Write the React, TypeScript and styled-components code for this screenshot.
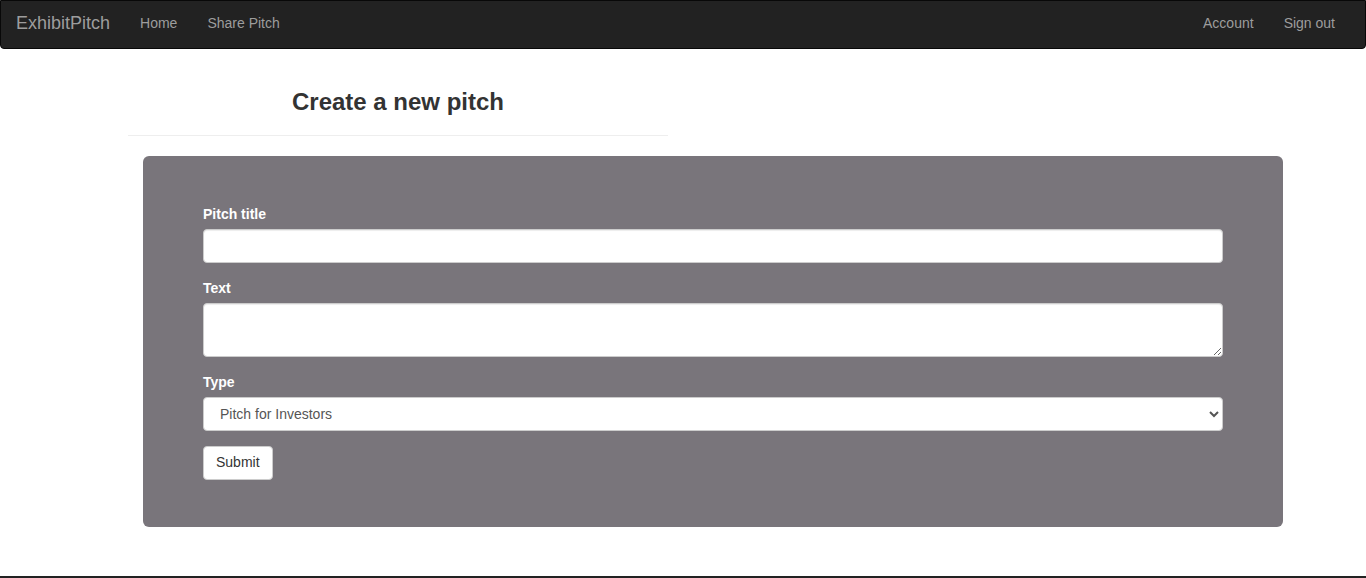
import React from "react";
import styled, { createGlobalStyle } from "styled-components";

const GlobalStyle = createGlobalStyle`
  html, body { margin: 0; padding: 0; background: #fff; }
  body {
    font-family: "Liberation Sans", Arial, Helvetica, sans-serif;
    font-size: 14px;
    line-height: 1.42857;
    color: #333;
  }
  * { box-sizing: border-box; }
`;

const Navbar = styled.nav`
  height: 49px;
  background: #222;
  border: 1px solid #080808;
  border-radius: 0 0 4px 4px;
  display: flex;
  align-items: center;
  justify-content: space-between;
  padding: 0 15px 3px;
`;

const NavGroup = styled.div`
  display: flex;
  align-items: center;
`;

const Brand = styled.a`
  font-size: 18px;
  line-height: 20px;
  color: #9d9d9d;
  padding: 0 15px 0 0;
  text-decoration: none;
`;

const NavLink = styled.a`
  font-size: 14px;
  line-height: 20px;
  color: #9d9d9d;
  padding: 0 15px;
  text-decoration: none;
`;

const Main = styled.main`
  padding: 0 83px 0 128px;
  height: 527px;
`;

const Header = styled.div`
  width: 540px;
  padding-top: 40px;
  border-bottom: 1px solid #eee;
  padding-bottom: 20px;
  margin-bottom: 20px;
`;

const Title = styled.h2`
  margin: 0;
  text-align: center;
  font-size: 24px;
  line-height: 26px;
  font-weight: 700;
  color: #333;
`;

const Panel = styled.form`
  margin-left: 15px;
  background: #79757b;
  border-radius: 6px;
  padding: 48px 60px 47px;
`;

const FormGroup = styled.div`
  margin-bottom: 15px;
`;

const Label = styled.label`
  display: block;
  font-weight: 700;
  color: #fff;
  line-height: 20px;
  margin-bottom: 5px;
`;

const Input = styled.input`
  display: block;
  width: 100%;
  height: 34px;
  padding: 6px 12px;
  font: inherit;
  color: #555;
  background: #fff;
  border: 1px solid #ccc;
  border-radius: 4px;
  box-shadow: inset 0 1px 1px rgba(0, 0, 0, 0.075);
`;

const TextArea = styled.textarea`
  display: block;
  width: 100%;
  height: 54px;
  padding: 6px 12px;
  font: inherit;
  color: #555;
  background: #fff;
  border: 1px solid #ccc;
  border-radius: 4px;
  box-shadow: inset 0 1px 1px rgba(0, 0, 0, 0.075);
`;

const Select = styled.select`
  display: block;
  width: 100%;
  height: 34px;
  padding: 6px 8px 6px 12px;
  font: inherit;
  color: #555;
  background: #fff;
  border: 1px solid #ccc;
  border-radius: 4px;
`;

const Button = styled.button`
  height: 34px;
  padding: 6px 12px;
  font: inherit;
  color: #333;
  background: #fff;
  border: 1px solid #ccc;
  border-radius: 4px;
`;

const Footer = styled.footer`
  background: #222;
  height: 60px;
  display: flex;
  justify-content: flex-end;
  padding: 1px 20px 0 0;
  color: #777;
  font-size: 14px;
  line-height: 20px;
`;

export default function App() {
  return (
    <>
      <GlobalStyle />
      <Navbar>
        <NavGroup>
          <Brand href="#">ExhibitPitch</Brand>
          <NavLink href="#">Home</NavLink>
          <NavLink href="#">Share Pitch</NavLink>
        </NavGroup>
        <NavGroup>
          <NavLink href="#">Account</NavLink>
          <NavLink href="#">Sign out</NavLink>
        </NavGroup>
      </Navbar>
      <Main>
        <Header>
          <Title>Create a new pitch</Title>
        </Header>
        <Panel onSubmit={(e) => e.preventDefault()}>
          <FormGroup>
            <Label>Pitch title</Label>
            <Input type="text" />
          </FormGroup>
          <FormGroup>
            <Label>Text</Label>
            <TextArea />
          </FormGroup>
          <FormGroup>
            <Label>Type</Label>
            <Select defaultValue="investors">
              <option value="investors">Pitch for Investors</option>
              <option value="partners">Pitch for Partners</option>
            </Select>
          </FormGroup>
          <Button type="submit">Submit</Button>
        </Panel>
      </Main>
      <Footer>© ExhibitPitch — All rights reserved</Footer>
    </>
  );
}
